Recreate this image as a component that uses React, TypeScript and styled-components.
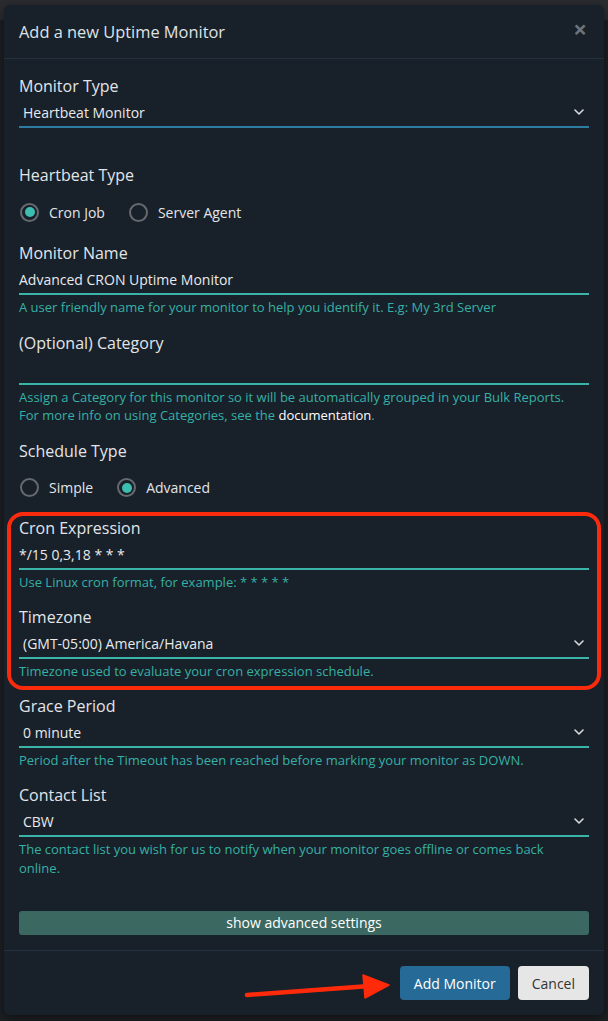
import React from 'react';
import styled, { createGlobalStyle } from 'styled-components';

const GlobalStyle = createGlobalStyle`
  html, body {
    margin: 0;
    padding: 0;
  }
  body {
    font-family: "Open Sans", "Noto Sans", sans-serif;
    background: #1d2024;
  }
  * {
    box-sizing: border-box;
  }
`;

const Chevron: React.FC = () => (
  <ChevronIcon viewBox="0 0 10 6">
    <path d="M1 1l4 4 4-4" fill="none" stroke="#d6dadd" strokeWidth="1.6" strokeLinecap="round" strokeLinejoin="round" />
  </ChevronIcon>
);

interface RadioOption {
  label: string;
  checked?: boolean;
}

const RadioGroup: React.FC<{ options: RadioOption[] }> = ({ options }) => (
  <RadioRow>
    {options.map((o) => (
      <RadioItem key={o.label}>
        <RadioCircle $checked={!!o.checked} />
        <span>{o.label}</span>
      </RadioItem>
    ))}
  </RadioRow>
);

const App: React.FC = () => {
  return (
    <Page>
      <GlobalStyle />
      <Modal>
        <Header>
          <Title>Add a new Uptime Monitor</Title>
          <Close>×</Close>
        </Header>

        <Body>
          <Field>
            <Label>Monitor Type</Label>
            <Select $accent="#2f7ca3">
              <span>Heartbeat Monitor</span>
              <Chevron />
            </Select>
            <Help />
          </Field>

          <Label>Heartbeat Type</Label>
          <RadioGroup options={[{ label: 'Cron Job', checked: true }, { label: 'Server Agent' }]} />

          <Field>
            <Label>Monitor Name</Label>
            <TextInput>Advanced CRON Uptime Monitor</TextInput>
            <Help>A user friendly name for your monitor to help you identify it. E.g: My 3rd Server</Help>
          </Field>

          <Field>
            <Label>(Optional) Category</Label>
            <TextInput />
            <Help>
              Assign a Category for this monitor so it will be automatically grouped in your Bulk Reports.
              <br />
              For more info on using Categories, see the <DocLink>documentation</DocLink>.
            </Help>
          </Field>

          <Label>Schedule Type</Label>
          <RadioGroup options={[{ label: 'Simple' }, { label: 'Advanced', checked: true }]} />

          <Highlight>
            <Field>
              <Label>Cron Expression</Label>
              <TextInput>*/15 0,3,18 * * *</TextInput>
              <Help>Use Linux cron format, for example: * * * * *</Help>
            </Field>
            <Field $last>
              <Label>Timezone</Label>
              <Select>
                <span>(GMT-05:00) America/Havana</span>
                <Chevron />
              </Select>
              <Help>Timezone used to evaluate your cron expression schedule.</Help>
            </Field>
          </Highlight>

          <Field>
            <Label>Grace Period</Label>
            <Select>
              <span>0 minute</span>
              <Chevron />
            </Select>
            <Help>Period after the Timeout has been reached before marking your monitor as DOWN.</Help>
          </Field>

          <Field>
            <Label>Contact List</Label>
            <Select>
              <span>CBW</span>
              <Chevron />
            </Select>
            <Help>The contact list you wish for us to notify when your monitor goes offline or comes back online.</Help>
          </Field>

          <AdvancedToggle>show advanced settings</AdvancedToggle>
        </Body>

        <Footer>
          <Arrow viewBox="0 0 160 34">
            <path d="M7 29 L130 20" stroke="#ff2a0a" strokeWidth="4.5" strokeLinecap="round" />
            <path d="M123 9 L149 19 L125 32 Z" fill="#ff2a0a" stroke="#ff2a0a" strokeWidth="1.5" strokeLinejoin="round" />
          </Arrow>
          <PrimaryButton>Add Monitor</PrimaryButton>
          <SecondaryButton>Cancel</SecondaryButton>
        </Footer>
      </Modal>
    </Page>
  );
};

export default App;

const Page = styled.div`
  min-height: 1021px;
  padding: 5px 4px 6px;
  background: linear-gradient(#2a2c30 0, #2a2c30 20px, #1d2024 20px);
`;

const Modal = styled.div`
  width: 600px;
  background: #18202a;
  border-radius: 6px;
  box-shadow: 0 3px 12px rgba(0, 0, 0, 0.5);
  color: #e2e5e8;
`;

const Header = styled.div`
  height: 54px;
  padding: 0 15px;
  display: flex;
  align-items: center;
  justify-content: space-between;
  border-bottom: 1px solid #243140;
`;

const Title = styled.h4`
  margin: 0;
  font-size: 16.4px;
  font-weight: 400;
  color: #dfe3e6;
`;

const Close = styled.span`
  font-size: 24px;
  font-weight: 700;
  line-height: 1;
  color: #6c737b;
  margin: -6px 2px 0 0;
`;

const Body = styled.div`
  padding: 15px 15px 15px;
`;

const Field = styled.div<{ $last?: boolean }>`
  margin-bottom: ${({ $last }) => ($last ? '5px' : '14px')};
`;

const Label = styled.div`
  font-size: 16px;
  line-height: 24px;
  color: #e2e5e8;
`;

const TextInput = styled.div`
  height: 30px;
  padding-top: 1px;
  font-size: 14px;
  line-height: 28px;
  color: #e8eaec;
  border-bottom: 2px solid #3ab3a8;
`;

const Select = styled.div<{ $accent?: string }>`
  height: 30px;
  padding: 1px 5px 0 4px;
  display: flex;
  align-items: center;
  justify-content: space-between;
  font-size: 14px;
  color: #e8eaec;
  border-bottom: 2px solid ${({ $accent }) => $accent || '#3ab3a8'};
`;

const ChevronIcon = styled.svg`
  width: 10px;
  height: 6px;
  margin-top: -1px;
`;

const Help = styled.div`
  margin-top: 3px;
  padding-right: 12px;
  min-height: 18px;
  font-size: 13px;
  line-height: 18.5px;
  color: #37b0a4;
`;

const DocLink = styled.span`
  color: #ffffff;
`;

const RadioRow = styled.div`
  display: flex;
  align-items: center;
  gap: 24px;
  height: 24px;
  margin: 13px 0 17px 1px;
`;

const RadioItem = styled.label`
  display: flex;
  align-items: center;
  gap: 10px;
  font-size: 14px;
  color: #e2e5e8;
`;

const RadioCircle = styled.span<{ $checked: boolean }>`
  width: 19px;
  height: 19px;
  border-radius: 50%;
  border: 2px solid #66696d;
  display: flex;
  align-items: center;
  justify-content: center;

  &::after {
    content: '';
    width: 10px;
    height: 10px;
    border-radius: 50%;
    background: ${({ $checked }) => ($checked ? '#3dbcb0' : 'transparent')};
  }
`;

const Highlight = styled.div`
  margin: -5px -12px 4px;
  padding: 0 8px;
  border: 4px solid #fa2b0d;
  border-radius: 16px;
`;

const AdvancedToggle = styled.div`
  margin-top: 34px;
  height: 24px;
  border-radius: 3px;
  background: #3b6961;
  color: #ffffff;
  font-size: 14px;
  line-height: 24px;
  text-align: center;
`;

const Footer = styled.div`
  position: relative;
  padding: 15px;
  display: flex;
  justify-content: flex-end;
  gap: 8px;
  border-top: 1px solid #243140;
`;

const Arrow = styled.svg`
  position: absolute;
  left: 236px;
  top: 15px;
  width: 160px;
  height: 34px;
`;

const PrimaryButton = styled.button`
  height: 34px;
  padding: 0 14px;
  border: none;
  border-radius: 4px;
  background: #266a98;
  color: #ffffff;
  font-family: inherit;
  font-size: 14px;
`;

const SecondaryButton = styled.button`
  height: 34px;
  padding: 0 14px;
  border: none;
  border-radius: 4px;
  background: #e6e6e6;
  color: #333333;
  font-family: inherit;
  font-size: 14px;
`;
